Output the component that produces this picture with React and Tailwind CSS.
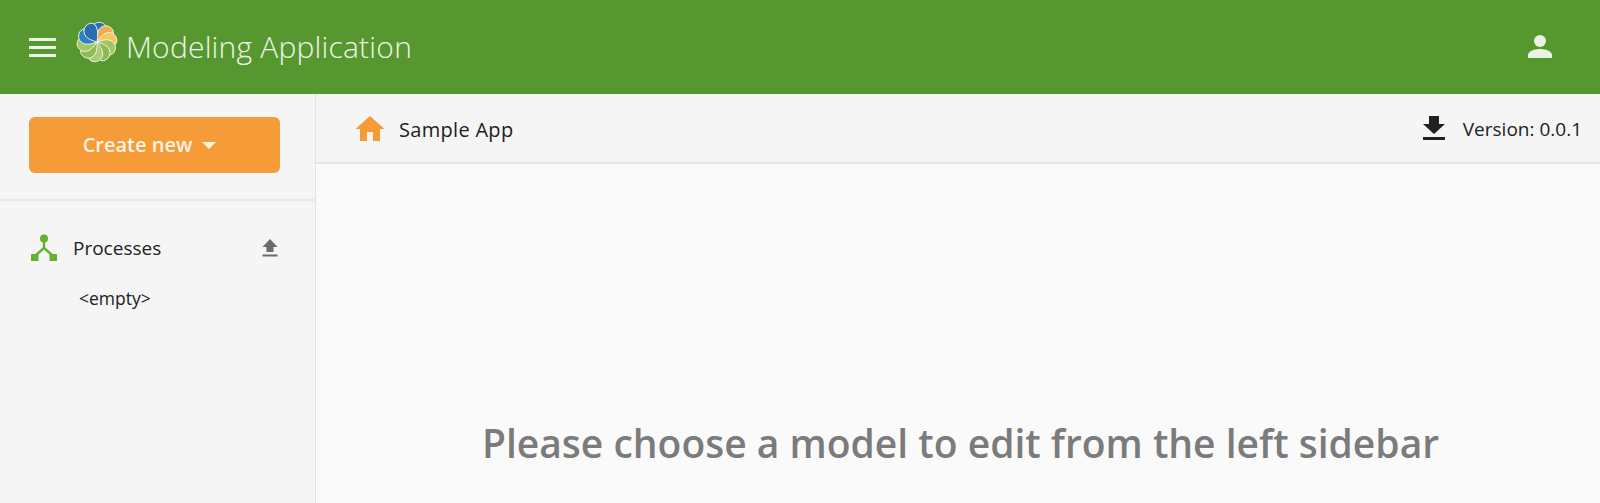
const FONT = "font-['Open_Sans',sans-serif]";

// petal colours, clockwise from the top
const PETALS = ['#2a6fb8', '#f6a94c', '#f7c65e', '#a3c566', '#8dba55', '#a9cc74', '#8dba55', '#a3c566', '#2f7fc4', '#2a6cb2'];

const Logo = () => (
  <svg width="42" height="42" viewBox="-21 -21 42 42" className="shrink-0">
    {PETALS.map((color, i) => (
      <path
        key={i}
        d="M0 0 C-4 -5 -7 -10 -5 -15 C-3 -20 4 -21 7 -18 C10 -15 9 -9 0 0 Z"
        fill={color}
        stroke="#f1f6ea"
        strokeWidth="0.9"
        transform={`rotate(${i * 36})`}
      />
    ))}
  </svg>
);

const ProcessIcon = () => (
  <svg width="28" height="28" viewBox="0 0 28 28" className="shrink-0">
    <circle cx="14" cy="4.5" r="4" fill="#65b02e" />
    <path d="M14 6 V14 L5 22 M14 14 L23 22" fill="none" stroke="#65b02e" strokeWidth="2.4" />
    <rect x="1" y="20" width="7.5" height="7" fill="#65b02e" />
    <rect x="19.5" y="20" width="7.5" height="7" fill="#65b02e" />
  </svg>
);

const UploadIcon = () => (
  <svg width="18" height="20" viewBox="0 0 18 20">
    <path d="M9 1 L16.5 9 H12.5 V14 H5.5 V9 H1.5 Z M1.5 16.5 H16.5 V18.5 H1.5 Z" fill="#6b6b6b" />
  </svg>
);

const DownloadIcon = () => (
  <svg width="24" height="26" viewBox="0 0 24 26">
    <path d="M7 1 H17 V9 H23 L12 19 L1 9 H7 Z M1 22 H23 V25 H1 Z" fill="#212121" />
  </svg>
);

const HomeIcon = () => (
  <svg width="30" height="26" viewBox="0 0 30 26">
    <path d="M15 1 L29.5 14 H25 V26 H18 V17 H12 V26 H5 V14 H0.5 Z" fill="#f59c36" />
  </svg>
);

const UserIcon = () => (
  <svg width="26" height="26" viewBox="0 0 26 26">
    <circle cx="13" cy="7" r="6" fill="#eaf2e4" />
    <path d="M1 24 V21 C1 17 8 15 13 15 C18 15 25 17 25 21 V24 Z" fill="#eaf2e4" />
  </svg>
);

export default function App() {
  return (
    <div className={`${FONT} flex h-[503px] w-full flex-col overflow-hidden bg-[#fafafa]`}>
      {/* Top bar */}
      <header className="flex h-[94px] shrink-0 items-center bg-[#56982f] pl-[29px] pr-[47px] text-[#eef5e8]">
        <div className="flex w-[27px] flex-col gap-[5px]">
          <span className="h-[3px] bg-[#eef5e8]" />
          <span className="h-[3px] bg-[#eef5e8]" />
          <span className="h-[3px] bg-[#eef5e8]" />
        </div>
        <div className="ml-[20px] mb-[11px]"><Logo /></div>
        <span className="mb-[2px] ml-[8px] text-[30px] font-light tracking-[0.2px]">Modeling Application</span>
        <div className="ml-auto"><UserIcon /></div>
      </header>

      <div className="flex min-h-0 flex-1">
        {/* Sidebar */}
        <aside className="flex w-[316px] shrink-0 flex-col border-r border-[#e2e2e2] bg-[#f5f5f5]">
          <div className="h-[107px] shrink-0 border-b-2 border-[#e8e8e8] px-[29px] pt-[23px]">
            <button className="flex h-[56px] w-[251px] items-center justify-center gap-[10px] rounded-[6px] bg-[#f59c38] pr-[10px] text-[20px] font-semibold text-[#fff3e4]">
              Create new
              <span className="mt-[1px] h-0 w-0 border-x-[7px] border-t-[7px] border-x-transparent border-t-[#fff3e4]" />
            </button>
          </div>
          <div className="flex items-center pl-[30px] pr-[36px] pt-[33px]">
            <ProcessIcon />
            <span className="ml-[15px] text-[19px] text-[#212121]">Processes</span>
            <div className="ml-auto"><UploadIcon /></div>
          </div>
          <div className="pl-[79px] pt-[22px] text-[17.5px] text-[#212121]">&lt;empty&gt;</div>
        </aside>

        {/* Main */}
        <main className="flex min-w-0 flex-1 flex-col">
          <div className="flex h-[70px] shrink-0 items-center border-b-2 border-[#e4e4e4] bg-[#f5f5f5] pl-[39px] pr-[18px]">
            <HomeIcon />
            <span className="ml-[14px] pt-[3px] text-[20px] tracking-[0.3px] text-[#212121]">Sample App</span>
            <div className="ml-auto flex items-center">
              <DownloadIcon />
              <span className="ml-[17px] pt-[3px] text-[19px] text-[#212121]">Version: 0.0.1</span>
            </div>
          </div>
          <div className="flex flex-1 justify-center pl-[5px] pt-[250px]">
            <h1 className="h-fit text-[39px] font-semibold text-[#7b7b7b]">Please choose a model to edit from the left sidebar</h1>
          </div>
        </main>
      </div>
    </div>
  );
}
